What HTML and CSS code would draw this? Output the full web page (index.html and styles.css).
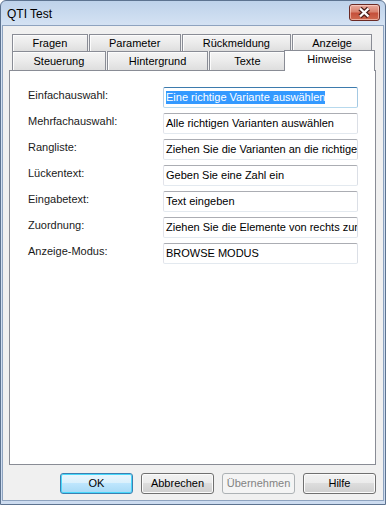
FILE: index.html
```html
<!DOCTYPE html>
<html lang="de">
<head>
    <meta charset="UTF-8">
    <title>QTI Test</title>
    <link rel="stylesheet" href="styles.css">
</head>
<body>
    <div class="window">
        <div class="titlebar">
            <span class="title">QTI Test</span>
            <div class="close">
                <svg width="29" height="15" viewBox="0 0 29 15">
                    <path d="M10 3.5 L18.5 11.5 M18.5 3.5 L10 11.5" stroke="#4a1d18" stroke-width="4.6" fill="none"/>
                    <path d="M10 3.5 L18.5 11.5 M18.5 3.5 L10 11.5" stroke="#ffffff" stroke-width="2.4" fill="none"/>
                </svg>
            </div>
        </div>
        <div class="client">
            <div class="tabs">
                <div class="tab-row row-top">
                    <div class="tab" style="width:76px">Fragen</div>
                    <div class="tab" style="width:92px">Parameter</div>
                    <div class="tab" style="width:110px">Rückmeldung</div>
                    <div class="tab" style="width:80px">Anzeige</div>
                </div>
                <div class="tab-row row-bottom">
                    <div class="tab" style="width:94px">Steuerung</div>
                    <div class="tab" style="width:102px">Hintergrund</div>
                    <div class="tab" style="width:76px">Texte</div>
                    <div class="tab selected" style="width:91px">Hinweise</div>
                </div>
            </div>
            <div class="panel">
                <div class="form">
                    <div class="label">Einfachauswahl:</div>
                    <div class="textbox focused"><span class="sel">Eine richtige Variante auswählen</span></div>
                    <div class="label">Mehrfachauswahl:</div>
                    <div class="textbox">Alle richtigen Varianten auswählen</div>
                    <div class="label">Rangliste:</div>
                    <div class="textbox">Ziehen Sie die Varianten an die richtige Stelle</div>
                    <div class="label">Lückentext:</div>
                    <div class="textbox">Geben Sie eine Zahl ein</div>
                    <div class="label">Eingabetext:</div>
                    <div class="textbox">Text eingeben</div>
                    <div class="label">Zuordnung:</div>
                    <div class="textbox">Ziehen Sie die Elemente von rechts zum</div>
                    <div class="label">Anzeige-Modus:</div>
                    <div class="textbox">BROWSE MODUS</div>
                </div>
            </div>
            <div class="buttons">
                <div class="btn default">OK</div>
                <div class="btn">Abbrechen</div>
                <div class="btn disabled">Übernehmen</div>
                <div class="btn">Hilfe</div>
            </div>
        </div>
    </div>
</body>
</html>
```

FILE: styles.css
```css
body {
    margin: 0;
    font-family: "Liberation Sans", Arial, sans-serif;
    font-size: 11px;
    color: #000;
    background: #fff;
}
.window {
    width: 386px;
    height: 505px;
    box-sizing: border-box;
    border: 1px solid #5d7390;
    border-radius: 6px 6px 0 0;
    background: linear-gradient(#bed2ea, #d4e2f3 24px, #cddcf0);
    padding: 0 1px 3px 1px;
    display: flex;
    flex-direction: column;
}
.titlebar {
    height: 24px;
    display: flex;
    justify-content: space-between;
    align-items: flex-start;
    padding-left: 5px;
}
.title {
    font-size: 12px;
    line-height: 14px;
    margin-top: 6px;
}
.close {
    width: 29px;
    height: 15px;
    margin-top: 3px;
    margin-right: 4px;
    border: 1px solid #6b2a24;
    border-radius: 3px;
    background: linear-gradient(#e9ab9f, #d9836f 45%, #c5503b 55%, #cf6a50);
    box-shadow: inset 0 0 0 1px rgba(255, 220, 210, 0.6);
}
.close svg {
    display: block;
}
.client {
    flex: 1;
    display: flex;
    flex-direction: column;
    background: #f0f0f0;
    border: 1px solid #8ea3bf;
    padding: 8px 7px 0 6px;
}
.tabs {
    margin: 0 3px 0 3px;
}
.tab-row {
    display: flex;
    align-items: flex-start;
}
.row-top {
    height: 17px;
}
.row-bottom {
    height: 19px;
}
.tab {
    box-sizing: border-box;
    border: 1px solid #898c95;
    border-bottom: none;
    margin-right: 1px;
    background: linear-gradient(#f4f4f4, #ebebeb 50%, #dedede);
    box-shadow: inset 1px 1px 0 #fcfcfc;
    text-align: center;
    line-height: 13px;
}
.row-top .tab {
    height: 17px;
    padding-top: 2px;
}
.row-bottom .tab {
    height: 19px;
    padding-top: 3px;
}
.row-bottom .tab.selected {
    position: relative;
    z-index: 1;
    height: 21px;
    margin: -1px -2px 0 -2px;
    padding-top: 2px;
    background: #fff;
    box-shadow: none;
}
.panel {
    flex: 1;
    background: #fff;
    border: 1px solid #898c95;
}
.form {
    display: grid;
    grid-template-columns: 135px 195px;
    grid-auto-rows: 21px;
    row-gap: 5px;
    padding: 16px 0 0 18px;
}
.label {
    padding-top: 2px;
    line-height: 13px;
    color: #1a1a1a;
}
.textbox {
    box-sizing: border-box;
    border: 1px solid;
    border-color: #abadb3 #dbdfe6 #e3e9ef #e2e3ea;
    border-radius: 2px;
    padding: 0 2px;
    line-height: 19px;
    white-space: nowrap;
    overflow: hidden;
}
.textbox.focused {
    border-color: #3d7bad #a4c9e3 #b7d9ed #b5cfe7;
}
.sel {
    background: #3399ff;
    color: #fff;
    display: inline-block;
    line-height: 13px;
}
.buttons {
    display: flex;
    justify-content: flex-end;
    gap: 8px;
    padding: 8px 0 6px 0;
}
.btn {
    width: 73px;
    height: 21px;
    box-sizing: border-box;
    border: 1px solid #707070;
    border-radius: 3px;
    background: linear-gradient(#f2f2f2, #ebebeb 50%, #dddddd 50%, #cfcfcf);
    box-shadow: inset 0 0 0 1px #fbfbfb;
    text-align: center;
    line-height: 19px;
}
.btn.default {
    border-color: #3c7fb1;
    background: linear-gradient(#eaf6fd, #d9f0fc 50%, #bee6fd 50%, #a7d9f5);
    box-shadow: inset 0 0 0 1px #48d8fb;
}
.btn.disabled {
    border-color: #adb2b5;
    background: #f4f4f4;
    box-shadow: none;
    color: #838383;
}
```
